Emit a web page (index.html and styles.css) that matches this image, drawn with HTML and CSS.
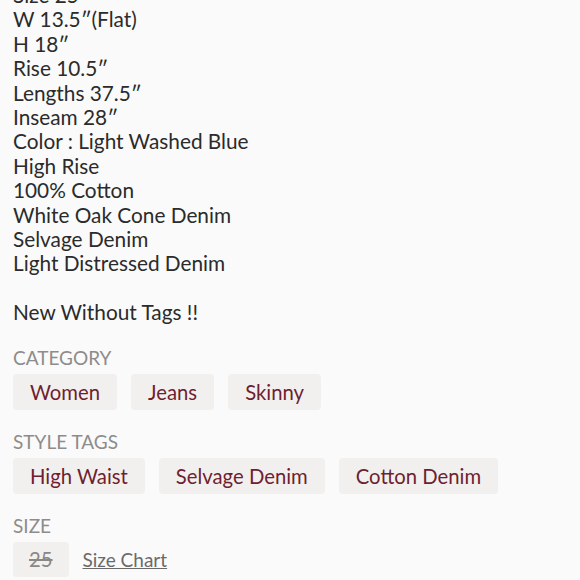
FILE: index.html
```html
<!DOCTYPE html>
<html>
<head>
<meta charset="utf-8">
<link rel="stylesheet" href="styles.css">
</head>
<body>
<div class="page">
  <div class="desc">
    <div>Size 25</div>
    <div>W 13.5″(Flat)</div>
    <div>H 18″</div>
    <div>Rise 10.5″</div>
    <div>Lengths 37.5″</div>
    <div>Inseam 28″</div>
    <div>Color : Light Washed Blue</div>
    <div>High Rise</div>
    <div>100% Cotton</div>
    <div>White Oak Cone Denim</div>
    <div>Selvage Denim</div>
    <div>Light Distressed Denim</div>
    <div class="blank"></div>
    <div>New Without Tags !!</div>
  </div>

  <section class="section">
    <div class="label">CATEGORY</div>
    <div class="chips">
      <span class="chip">Women</span>
      <span class="chip">Jeans</span>
      <span class="chip">Skinny</span>
    </div>
  </section>

  <section class="section">
    <div class="label">STYLE TAGS</div>
    <div class="chips">
      <span class="chip">High Waist</span>
      <span class="chip">Selvage Denim</span>
      <span class="chip">Cotton Denim</span>
    </div>
  </section>

  <section class="section">
    <div class="label">SIZE</div>
    <div class="chips size-row">
      <span class="chip size">25</span>
      <a class="size-chart" href="#">Size Chart</a>
    </div>
  </section>
</div>
</body>
</html>
```

FILE: styles.css
```css
html, body {
  margin: 0;
  padding: 0;
  background: #fafafa;
}
body {
  font-family: "Lato", "Open Sans", sans-serif;
  color: #2b2b2b;
  overflow: hidden;
  height: 580px;
}
.page {
  padding-left: 13px;
  margin-top: -17px;
}
.desc {
  font-size: 20.8px;
  line-height: 24.4px;
}
.blank {
  height: 24.4px;
}
.section {
  margin-top: 22px;
}
.section + .section {
  margin-top: 21px;
}
.label {
  font-size: 19px;
  line-height: 22px;
  color: #8e8c8a;
  margin-bottom: 5px;
}
.chips {
  display: flex;
  gap: 14px;
  align-items: center;
}
.chip {
  display: inline-block;
  background: #f2f0ee;
  border-radius: 4px;
  height: 36px;
  line-height: 36px;
  padding: 0 17px;
  font-size: 20.3px;
  color: #6e1f30;
}
.chip.size {
  color: #8a8886;
  text-decoration: line-through;
  padding: 0 16px;
  height: 35px;
  line-height: 35px;
}
.size-chart {
  color: #6a6a6a;
  font-size: 19px;
  text-decoration: underline;
}
```
